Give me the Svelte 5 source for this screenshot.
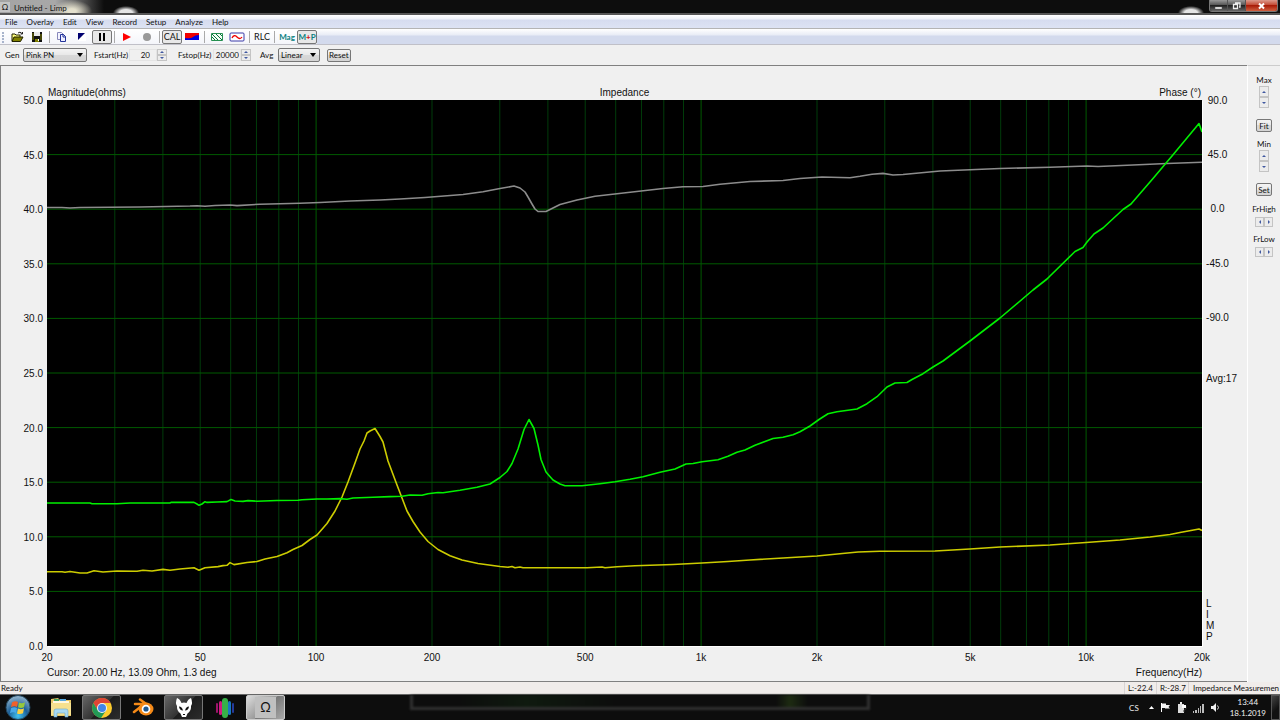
<script>
  const menus = ['File', 'Overlay', 'Edit', 'View', 'Record', 'Setup', 'Analyze', 'Help'];

  let generator = 'Pink PN';
  let averaging = 'Linear';
  let fstart = '20';
  let fstop = '20000';

  // plot area, in svg units
  const plot = { x: 47, y: 100, width: 1155, height: 546 };

  const fMin = 20;
  const fMax = 20000;
  const ratio = (f) => Math.log(f / fMin) / Math.log(fMax / fMin);

  // vertical grid lines, 1-2-3..9 in every decade
  const gridFreqs = [10, 100, 1000, 10000]
    .flatMap(decade => [1, 2, 3, 4, 5, 6, 7, 8, 9].map(n => n * decade))
    .filter(f => f > fMin && f < fMax);
  const gridX = gridFreqs.map(f => ({
    x: plot.x + ratio(f) * plot.width,
    major: String(f)[0] === '1',
  }));
  const gridY = [1, 2, 3, 4, 5, 6, 7, 8, 9].map(i => plot.y + (i * plot.height) / 10);

  const ohms = ['50.0', '45.0', '40.0', '35.0', '30.0', '25.0', '20.0', '15.0', '10.0', '5.0', '0.0'];
  const phases = ['90.0', '45.0', '0.0', '-45.0', '-90.0'];

  const ticks = [
    [20, '20'], [50, '50'], [100, '100'], [200, '200'], [500, '500'],
    [1000, '1k'], [2000, '2k'], [5000, '5k'], [10000, '10k'], [20000, '20k'],
  ].map(([f, label], i, all) => ({
    label,
    span: i < all.length - 1 ? (ratio(all[i + 1][0]) - ratio(f)) * 100 : 0,
  }));

  const phaseCurve = `47,207.5 62,207.5 70,208 80,207.5 140,207 190,206 197,205.7 205,206.3 215,205.5 230,205 237,205.6
    260,204.2 300,203.3 320,202.5 350,201 380,200 400,199 425,197.5 463,194.5 483,191.7 500,188.5 514,186 520,188
    525,192 528,197 532,204 535,209 538,211.5 546,211.5 552,208.5 560,204.5 577,200 595,196.2 617,193.8 663,188.5
    683,186.7 703,186.5 720,184.3 750,181.5 783,180.5 800,178.5 822,177 850,177.7 860,176.3 872,174.3 883,173.4
    893,175 903,174.5 940,171 1000,168.5 1050,167.3 1087,166 1098,166.5 1133,165 1167,163.5 1202,162.3`;

  const overlayCurve = `47,571.7 62,571.7 65,572.3 70,571.5 80,573 87,573 94,570.8 103,572 117,571 137,571.3 143,570.3
    152,571 163,569.4 170,570.2 180,569 194,567.8 199,570.2 205,567.7 218,566.6 223,565.6 227,565.3 230,562.6
    234,564.6 247,562.5 257,561.5 265,559 277,556.5 287,552.7 293,549.5 302,545.5 310,539.5 317,535 327,523.5
    335,511 342,497 348,482 355,463 360,449 364,441 367,433 370,431 375,428.5 380,436.5 383,442 388,461 397,485
    402,498 407,511 413,521.5 420,532 428,541.5 438,549.5 450,555.7 462,560 478,563.5 500,566.5 508,567.3
    512,566.5 515,567.7 520,567 523,567.8 587,567.8 602,567 605,567.7 617,566.7 635,565.8 673,564.5 702,563
    728,561.5 750,560 800,557 817,556 845,553.2 858,552 880,551.3 935,551 970,549 1000,547 1050,545 1086,542.5
    1120,540 1150,537 1170,534.5 1180,532.5 1199,529 1202,530.5`;

  const magnitudeCurve = `47,503 90,503 92,503.7 117,503.7 130,503 170,503 171,502.4 194,502.4 197,504 199,505.3
    202,504 205,501.7 207,502.4 217,502 227,501.6 231,499.5 235,501 243,501.4 248,500.6 257,501.2 277,500.5
    298,500.3 302,499.7 317,499 327,499 340,498.6 347,499.2 353,498 373,497.2 390,496.6 402,496.3 410,495
    422,495.3 428,493.7 438,492.5 443,492.7 460,490.3 477,487.3 490,484 500,477.5 507,471.5 512,463.5 518,449
    524,429.5 529,419.5 534,428.5 538,445 541,459.5 544,467 546,472 549,475.5 553,480 560,484 565,485.7 582,485.7
    600,483.7 615,481.7 630,479.3 643,476.7 660,472.3 675,469 686,464 693,463.5 702,461.8 718,459.7 728,456.3
    737,452.3 745,450 755,445.3 767,440.7 773,438.5 783,437.3 793,434.7 800,431.7 810,426 819,419.5 828,413.8
    837,411.7 857,409 867,403.7 877,396.7 887,387 895,383 907,382.5 912,379.5 923,373.7 933,367 943,361 970,341
    1000,318 1033,290 1047,279 1050,276 1075,251.5 1083,247.5 1087,242 1094,234 1103,228 1123,209.5 1131,204
    1153,178.5 1172,156 1199,123.5 1202,132`;
</script>

<div class="screen">
  <header class="titlebar">
    <span class="app-icon">Ω</span>
    <span class="title">Untitled - Limp</span>
    <div class="window-buttons">
      <button aria-label="Minimize"><svg width="9" height="8"><path d="M1 5h7v2H1z" fill="#fff" stroke="#555" stroke-width=".5" /></svg></button>
      <button aria-label="Restore"><svg width="9" height="8"><path d="M3 1h5v4H7M1.500 2.500h4v4h-4z" fill="none" stroke="#eee" stroke-width="1.300" /></svg></button>
      <button class="close" aria-label="Close"><svg width="9" height="8"><path d="M2 1.500l5 5M7 1.500l-5 5" stroke="#fff" stroke-width="2" /></svg></button>
    </div>
  </header>

  <nav class="menubar">
    {#each menus as menu}
      <button>{menu}</button>
    {/each}
  </nav>

  <div class="toolbar">
    <div class="tools">
      <span class="grip"></span>
      <button aria-label="Open">
        <svg width="13" height="12"><path d="M1 10V3h3l1 1h4v2" fill="#ffff80" stroke="#222200" /><path d="M1 10.500l2-4.500h9l-2.500 4.500z" fill="#808000" stroke="#222200" /><path d="M7 2q2-2 4 .5M11.500 1v2h-2" fill="none" stroke="#222" /></svg>
      </button>
      <button aria-label="Save">
        <svg width="12" height="12"><path d="M1 1h10v10H1z" fill="#111" /><path d="M3 1h6v4H3z" fill="#e8e8e8" /><path d="M2 2v7M10 3v6" stroke="#808000" /><path d="M4 8h4v3H4z" fill="#808000" /><path d="M7 8h1v2H7z" fill="#fff" /></svg>
      </button>
      <i class="sep"></i>
      <button aria-label="Copy">
        <svg width="12" height="12"><path d="M1.500 1.500h4l2 2v5h-6z" fill="#f4f4ff" stroke="#8888bb" /><path d="M4.500 3.500h3l2 2v5h-5z" fill="#eef" stroke="#223399" /><path d="M7 3v3h3" fill="none" stroke="#223399" /></svg>
      </button>
      <button aria-label="Black and white">
        <svg width="10" height="10"><path d="M1 1h8v8H1z" fill="#fff" /><path d="M1 1h7L1 8z" fill="#000070" /></svg>
      </button>
      <button class="pressed" aria-label="Pause">
        <svg width="10" height="10"><path d="M2 1h2v8H2zM6 1h2v8H6z" fill="#000" /></svg>
      </button>
      <i class="sep"></i>
      <button aria-label="Start">
        <svg width="10" height="10"><path d="M1 1l8 4-8 4z" fill="#f00" /></svg>
      </button>
      <button aria-label="Stop">
        <svg width="10" height="10"><circle cx="5" cy="5" r="4" fill="#999" /></svg>
      </button>
      <i class="sep"></i>
      <button class="pressed cal">CAL</button>
      <button aria-label="Colors">
        <svg width="14" height="9"><path d="M0 1h14v7H0z" fill="#0000e0" /><path d="M0 1h14v2q-4 0-6 2t-8 1z" fill="#f00000" /></svg>
      </button>
      <i class="sep"></i>
      <button aria-label="Overlay">
        <svg width="12" height="10"><path d="M.500 1.500h11v7H.5z" fill="#f4fff4" stroke="#259050" /><path d="M1 2l6 6M5 2l6 6M1 5l3 3M9 2l2 2" stroke="#087040" /></svg>
      </button>
      <button aria-label="Signal">
        <svg width="16" height="10"><rect x="1" y="1" width="14" height="8" rx="1" fill="#fff" stroke="#3838a8" /><path d="M3 6q2-4 5-1t5 0" fill="none" stroke="#f00000" stroke-width="1.300" /></svg>
      </button>
      <i class="sep"></i>
      <button class="cal">RLC</button>
      <i class="sep"></i>
      <button class="mag">Mag</button>
      <button class="mag pressed">M<b>+</b>P</button>
    </div>
  </div>

  <div class="genbar">
    <label for="gen">Gen</label>
    <span class="combo gen">
      <select id="gen" bind:value={generator}><option>Pink PN</option><option>Sine</option></select>
      <svg width="7" height="4"><path d="M0 0h6L3 4z" fill="#000" /></svg>
    </span>
    <label for="fstart">Fstart(Hz)</label>
    <span class="number">
      <input id="fstart" bind:value={fstart} />
      <span class="spin">
        <button aria-label="Raise start"><svg width="4" height="2"><path d="M0 2l2-2 2 2z" /></svg></button>
        <button aria-label="Lower start"><svg width="4" height="2"><path d="M0 0l2 2 2-2z" /></svg></button>
      </span>
    </span>
    <label for="fstop" class="stop">Fstop(Hz)</label>
    <span class="number">
      <input id="fstop" bind:value={fstop} />
      <span class="spin">
        <button aria-label="Raise stop"><svg width="4" height="2"><path d="M0 2l2-2 2 2z" /></svg></button>
        <button aria-label="Lower stop"><svg width="4" height="2"><path d="M0 0l2 2 2-2z" /></svg></button>
      </span>
    </span>
    <label for="avg" class="avg-label">Avg</label>
    <span class="combo avg-combo">
      <select id="avg" bind:value={averaging}><option>Linear</option><option>None</option></select>
      <svg width="7" height="4"><path d="M0 0h6L3 4z" fill="#000" /></svg>
    </span>
    <button class="push">Reset</button>
  </div>

  <main>
    <section class="chart">
      <div class="captions">
        <span>Magnitude(ohms)</span>
        <span>Impedance</span>
        <span>Phase (°)</span>
      </div>

      <div class="ohms">
        {#each ohms as value}
          <span>{value}</span>
        {/each}
      </div>

      <svg class="plot" viewBox="47 100 1155 546" preserveAspectRatio="none">
        {#each gridX as line}
          <line class="grid" class:minor={!line.major} x1={line.x} x2={line.x} y1="100" y2="646" />
        {/each}
        {#each gridY as y}
          <line class="grid" x1="47" x2="1202" y1={y} y2={y} />
        {/each}
        <polyline points={phaseCurve} stroke="#8c8c8c" />
        <polyline points={overlayCurve} stroke="#cccc00" />
        <polyline points={magnitudeCurve} stroke="#00f000" />
      </svg>

      <div class="right-axis">
        <div class="phases">
          {#each phases as value}
            <span>{value}</span>
          {/each}
        </div>
        <span class="average">Avg:17</span>
        <div class="brand"><span>L</span><span>I</span><span>M</span><span>P</span></div>
      </div>

      <div class="footer">
        <div class="ticks">
          {#each ticks as tick}
            <div style="width: {tick.span}%"><span>{tick.label}</span></div>
          {/each}
        </div>
        <div class="info">
          <span>Cursor: 20.00 Hz, 13.09 Ohm, 1.3 deg</span>
          <span>Frequency(Hz)</span>
        </div>
      </div>
    </section>

    <aside>
      <span>Max</span>
      <span class="spin tall">
        <button aria-label="Raise max"><svg width="4" height="2"><path d="M0 2l2-2 2 2z" /></svg></button>
        <button aria-label="Lower max"><svg width="4" height="2"><path d="M0 0l2 2 2-2z" /></svg></button>
      </span>
      <button class="push">Fit</button>
      <span>Min</span>
      <span class="spin tall">
        <button aria-label="Raise min"><svg width="4" height="2"><path d="M0 2l2-2 2 2z" /></svg></button>
        <button aria-label="Lower min"><svg width="4" height="2"><path d="M0 0l2 2 2-2z" /></svg></button>
      </span>
      <button class="push">Set</button>
      <span class="limit">FrHigh</span>
      <span class="spin wide">
        <button aria-label="High limit down"><svg width="2" height="4"><path d="M2 0v4L0 2z" /></svg></button>
        <button aria-label="High limit up"><svg width="2" height="4"><path d="M0 0v4l2-2z" /></svg></button>
      </span>
      <span class="limit">FrLow</span>
      <span class="spin wide">
        <button aria-label="Low limit down"><svg width="2" height="4"><path d="M2 0v4L0 2z" /></svg></button>
        <button aria-label="Low limit up"><svg width="2" height="4"><path d="M0 0v4l2-2z" /></svg></button>
      </span>
    </aside>
  </main>

  <div class="statusbar">
    <span class="ready">Ready</span>
    <span class="cell">L:-22.4</span>
    <span class="cell">R:-28.7</span>
    <span class="cell device">Impedance Measuremen</span>
  </div>

  <footer class="taskbar">
    <div class="ghost"></div>
    <button class="start" aria-label="Start menu">
      <svg width="26" height="25" viewBox="0 0 26 25">
        <defs>
          <radialGradient id="orb" cx=".5" cy=".85" r=".8"><stop offset="0" stop-color="#43c4f0" /><stop offset=".5" stop-color="#1c6099" /><stop offset="1" stop-color="#8fb0c8" /></radialGradient>
        </defs>
        <circle cx="13" cy="12.500" r="12" fill="url(#orb)" stroke="#20465f" />
        <path d="M7 7.500q3-2 6-.5l-1 5q-3-1.500-6 .2z" fill="#f0602a" />
        <path d="M14 7.500q3 1.500 6-.3l-1 5q-3 1.500-6 0z" fill="#96c83c" />
        <path d="M6 13.200q3-1.800 6-.2l-1 5q-3-1.500-6 .2z" fill="#48a8e8" />
        <path d="M13 13.500q3 1.500 6-.3l-1 5q-3 1.500-6 .2z" fill="#fcd040" />
      </svg>
    </button>
    <button class="task" aria-label="Explorer">
      <svg width="22" height="21" viewBox="0 0 22 21">
        <path d="M1 2l7-1 2 2h11v16H1z" fill="#e8c868" />
        <path d="M4 2h5v3H4z" fill="#40a060" /><path d="M10 2h6v3h-6z" fill="#58a8e0" /><path d="M3 4h16v4H3z" fill="#fff8e0" />
        <path d="M1 6h20v12H1z" fill="#f6e08e" />
        <path d="M4 20v-6q0-2 2-2h10q2 0 2 2v6h-3v-4H7v4z" fill="#a8daf4" stroke="#68a8cc" stroke-width=".6" />
      </svg>
    </button>
    <button class="task open" aria-label="Chrome">
      <svg width="20" height="20" viewBox="0 0 20 20">
        <circle cx="10" cy="10" r="10" fill="#fccb2e" />
        <path d="M10 5h8.700A10 10 0 0 0 1.340 5L5.700 12.500z" fill="#df4535" />
        <path d="M1.340 5A10 10 0 0 0 9 19.900L14 12.500H6z" fill="#229956" />
        <circle cx="10" cy="10" r="5" fill="#f4f4f4" /><circle cx="10" cy="10" r="4" fill="#4285e8" />
      </svg>
    </button>
    <button class="task" aria-label="Blender">
      <svg width="22" height="19" viewBox="0 0 22 19">
        <path d="M8 1.500l7 5M3 6h12M2 14l9-7" stroke="#f58a18" stroke-width="2.500" stroke-linecap="round" />
        <ellipse cx="14" cy="11" rx="7.500" ry="6.500" fill="#f58a18" /><circle cx="14" cy="11" r="4.300" fill="#fff" /><circle cx="14" cy="11" r="2.600" fill="#205890" />
      </svg>
    </button>
    <button class="task open" aria-label="Foobar2000">
      <svg width="18" height="21" viewBox="0 0 18 21">
        <path d="M2 1q3 1 4.500 5Q9 5 11.500 6 13 2 16 1q2 5 0 8 .5 5-3.500 7.500L11 20H7l-1.500-3.500Q1.500 14 2 9 0 6 2 1z" fill="#fff" />
        <path d="M4 9.500q3 0 4 4-3.500 0-4-4zM14 9.500q-3 0-4 4 3.500 0 4-4z" fill="#111" /><path d="M8 17h2v1H8z" fill="#111" />
      </svg>
    </button>
    <button class="task" aria-label="Equalizer">
      <svg width="20" height="22" viewBox="0 0 20 22">
        <rect x="1" y="6" width="2" height="10" rx="1" fill="#a0146c" /><rect x="4" y="4" width="3" height="14" rx="1.500" fill="#d01880" />
        <rect x="7" y="1" width="6" height="20" rx="3" fill="#38b048" /><rect x="13" y="4" width="3" height="14" rx="1.500" fill="#1878c0" /><rect x="17" y="6" width="2" height="10" rx="1" fill="#243a9c" />
      </svg>
    </button>
    <button class="task open active" aria-label="Limp"><span>Ω</span></button>

    <div class="tray">
      <span class="lang">CS</span>
      <svg width="5" height="3"><path d="M0 3h5L2.500 0z" fill="#fff" /></svg>
      <svg width="11" height="11"><path d="M1.500 1v9" stroke="#fff" /><path d="M2 1.500h4V3h4L8.500 5 10 6.500H5V6H2z" fill="#f0f0f0" /></svg>
      <svg width="10" height="11"><path d="M1 2h6v9H1z" fill="#ddd" /><path d="M3 0h2v2H3z" fill="#eee" /><path d="M5 4h4v3L7 8v2" fill="none" stroke="#333" /><path d="M5 3h4v3H5z" fill="#fff" /></svg>
      <svg width="11" height="10"><path d="M0 8h1v2H0zM2 7h2v3H2zM5 5h1v5H5zM7 3h1v7H7zM9 1h2v9H9z" fill="#bbb" /></svg>
      <svg width="10" height="11"><path d="M1 4h2l3-3v9L3 7H1z" fill="#eee" /><path d="M7.500 3.500q2 2 0 4" fill="none" stroke="#ddd" /></svg>
      <div class="clock"><span>13:44</span><span>18.1.2019</span></div>
    </div>
    <button class="desktop" aria-label="Show desktop"></button>
  </footer>
</div>

<style>
  :global(body) {
    margin: 0;
    background: #0d0d0d;
  }

  .screen {
    display: flex;
    flex-direction: column;
    height: 100vh;
    overflow: hidden;
    font-family: Lato, "Noto Sans", sans-serif;
    font-size: 8px;
    line-height: 12px;
    color: #111;
    background: #f0f0f0;
  }

  button, input, select {
    margin: 0;
    padding: 0;
    border: 0;
    border-radius: 0;
    background: none;
    font: inherit;
    color: inherit;
  }

  button {
    display: flex;
    align-items: center;
    justify-content: center;
  }

  svg {
    display: block;
    flex: none;
  }

  /* title bar */
  .titlebar {
    box-sizing: border-box;
    display: flex;
    align-items: center;
    height: 15px;
    flex: none;
    border-bottom: 2px solid #555;
    background:
      radial-gradient(ellipse 20px 11px at 72px 11px, #e4e0cc 20%, transparent),
      radial-gradient(ellipse 13px 7px at 126px 13px, #e4e4e4 50%, transparent),
      radial-gradient(ellipse 13px 7px at 1191px 13px, #e4e4e4 50%, transparent),
      linear-gradient(90deg, #a4a4a4, #a8a8a8 55px, #606060 78px, #0d0d0d 104px);
  }

  .app-icon {
    width: 10px;
    height: 10px;
    line-height: 10px;
    text-align: center;
    background: #c4c4c4;
  }

  .title {
    margin-left: 4px;
    padding-top: 2px;
  }

  .window-buttons {
    display: flex;
    align-self: flex-start;
    margin-left: auto;
    margin-right: 2px;
    border: 1px solid #777;
    border-top: 0;
    border-radius: 0 0 3px 3px;
    overflow: hidden;
  }

  .window-buttons button {
    width: 18px;
    height: 11px;
    border-right: 1px solid #555;
    background: linear-gradient(#999, #555 45%, #222 50%, #666);
  }

  .window-buttons .close {
    width: 31px;
    border-right: 0;
    background: linear-gradient(#dc9a8c, #c24a34 45%, #a81c08 50%, #d06040);
  }

  /* menu */
  .menubar {
    box-sizing: border-box;
    display: flex;
    gap: 9px;
    height: 14px;
    flex: none;
    padding-left: 5px;
    border-bottom: 1px solid #b4b4b4;
    background: linear-gradient(#fff, #eef1f8 4px, #d6dcef 5px, #dde3f3);
  }

  /* toolbar */
  .toolbar {
    box-sizing: border-box;
    display: flex;
    height: 16px;
    flex: none;
    border-bottom: 1px solid #c0c0c8;
    background: linear-gradient(#fff, #e8ecf6 6px, #d3daed 7px, #d3daed);
  }

  .tools {
    display: flex;
    align-items: center;
    background: linear-gradient(#fff, #f4f5fa);
  }

  .grip {
    width: 7px;
    height: 12px;
    background: radial-gradient(circle at 3px 2px, #a8b4cc 1px, transparent 1px) 0 0 / 7px 3px;
  }

  .tools button {
    box-sizing: border-box;
    width: 20px;
    height: 14px;
  }

  .tools .pressed {
    border: 1px solid #777;
    border-radius: 2px;
    background: #e8e8e8;
  }

  .sep {
    width: 1px;
    height: 12px;
    margin: 0 2px;
    background: #aaa;
  }

  .tools .cal {
    font-size: 9px;
  }

  .tools .mag {
    font-weight: 700;
    color: #088080;
  }

  .mag b {
    color: #d02020;
  }

  /* generator bar */
  .genbar {
    display: flex;
    align-items: center;
    height: 20px;
    flex: none;
    padding-left: 5px;
  }

  .genbar label {
    white-space: nowrap;
  }

  .genbar label[for="gen"] {
    width: 14px;
  }

  .combo {
    box-sizing: border-box;
    display: grid;
    align-items: center;
    height: 14px;
    border: 1px solid #777;
    border-radius: 2px;
    background: linear-gradient(#f4f4f4, #e8e8e8 50%, #d8d8d8 50%, #d4d4d4);
  }

  .combo select {
    grid-area: 1 / 1;
    width: 100%;
    padding-left: 2px;
    appearance: none;
  }

  .combo svg {
    grid-area: 1 / 1;
    justify-self: end;
    margin-right: 2px;
    pointer-events: none;
  }

  .gen {
    width: 64px;
    margin: 0 7px 0 4px;
  }

  .genbar label[for="fstart"],
  .genbar .stop {
    width: 35px;
  }

  .avg-combo {
    width: 42px;
    margin-right: 7px;
  }

  .genbar .stop {
    margin-left: 11px;
  }

  .genbar .avg-label {
    width: 18px;
    margin-left: 9px;
  }

  .number {
    display: flex;
    align-items: center;
  }

  .number input {
    box-sizing: border-box;
    width: 28px;
    height: 12px;
    padding-right: 6px;
    border: 1px solid #e4e4e4;
    text-align: right;
  }

  .number #fstop {
    padding-right: 1px;
  }

  .spin {
    display: flex;
    flex-direction: column;
  }

  .spin button {
    box-sizing: border-box;
    width: 10px;
    height: 6px;
    border: 1px solid #c4c4c4;
    background: #ececec;
  }

  .spin svg {
    fill: #4058a0;
  }

  .spin.tall button {
    height: 11px;
  }

  .spin.wide {
    flex-direction: row;
  }

  .spin.wide button {
    width: 9px;
    height: 10px;
  }

  .push {
    box-sizing: border-box;
    height: 13px;
    min-width: 16px;
    padding: 0 1px;
    border: 1px solid #777;
    border-radius: 2px;
    background: linear-gradient(#f4f4f4, #e8e8e8 50%, #d8d8d8 50%, #d4d4d4);
  }

  /* chart */
  main {
    display: flex;
    flex: 1;
    min-height: 0;
  }

  .chart {
    display: grid;
    flex: 1;
    grid-template-columns: 46px 1fr 45px;
    grid-template-rows: 34px 1fr 35px;
    border: solid #808080;
    border-width: 1px 0 1px 1px;
    font-family: "Liberation Sans", Arial, sans-serif;
    font-size: 10px;
  }

  .captions {
    grid-column: 2;
    display: grid;
    grid-template-columns: 1fr 1fr 1fr;
    align-items: end;
    padding: 0 1px 1px;
    text-align: center;
  }

  .captions span:first-child {
    text-align: left;
  }

  .captions span:last-child {
    text-align: right;
  }

  .ohms, .phases {
    display: flex;
    flex-direction: column;
    justify-content: space-between;
  }

  .ohms {
    grid-column: 1;
    align-items: flex-end;
    padding-right: 4px;
  }

  .ohms span, .phases span {
    height: 0;
    line-height: 2px;
  }

  .plot {
    width: 100%;
    height: 100%;
    min-height: 0;
    background: #000;
    box-shadow: 1px 1px #fff;
  }

  .plot line, .plot polyline {
    fill: none;
    vector-effect: non-scaling-stroke;
  }

  .plot polyline {
    stroke-width: 1.6px;
    stroke-linejoin: round;
  }

  .grid {
    stroke: #005a00;
  }

  .grid.minor {
    stroke: #003c0a;
  }

  .right-axis {
    display: flex;
    flex-direction: column;
    padding-bottom: 4px;
  }

  .phases {
    flex: 0 0 40%;
    width: 31px;
    align-items: center;
  }

  .average {
    margin: 56px 0 0 4px;
  }

  .brand {
    display: flex;
    flex-direction: column;
    margin: auto 0 0 4px;
    line-height: 11px;
  }

  .footer {
    grid-column: 2;
    padding-top: 6px;
  }

  .ticks {
    display: flex;
  }

  .ticks span {
    display: flex;
    justify-content: center;
    width: 0;
  }

  .info {
    display: flex;
    justify-content: space-between;
    padding-top: 3px;
  }

  /* range panel */
  aside {
    box-sizing: border-box;
    display: flex;
    flex-direction: column;
    align-items: center;
    width: 33px;
    padding-top: 8px;
    border-left: 1px solid #fff;
    border-top: 1px solid #ccc;
  }

  aside .push {
    margin: 11px 0 6px;
  }

  aside .limit {
    padding: 1px 0 2px;
  }

  aside .wide {
    margin-bottom: 5px;
  }

  /* status bar */
  .statusbar {
    box-sizing: border-box;
    display: flex;
    height: 13px;
    flex: none;
    border-bottom: 1px solid #666;
    background: #f0ecea;
    white-space: nowrap;
  }

  .ready {
    flex: 1;
    padding-left: 1px;
  }

  .cell {
    box-sizing: border-box;
    width: 32px;
    padding-left: 3px;
    border-left: 1px solid #d8d4d4;
  }

  .cell.device {
    width: 92px;
    padding-left: 4px;
  }

  /* taskbar */
  .taskbar {
    position: relative;
    display: flex;
    align-items: center;
    height: 25px;
    flex: none;
    background: #0d0d0d;
    color: #f0f0f0;
  }

  .ghost {
    position: absolute;
    left: 32%;
    right: 32%;
    top: 0;
    height: 12px;
    border: solid #303030;
    border-width: 0 3px 3px;
    background: linear-gradient(90deg, #0d0d0d 10%, #0f1a0f 25%, #0d0d0d 45%, #0d0d0d 80%, #1d2b12 83%, #0d0d0d 87%);
    filter: blur(1px);
  }

  .start {
    width: 36px;
  }

  .task {
    box-sizing: border-box;
    width: 39px;
    height: 25px;
    margin-right: 2px;
    border: 1px solid transparent;
    border-radius: 2px;
  }

  .start + .task {
    margin-left: 5px;
  }

  .task.open {
    border-color: #777;
    background: linear-gradient(135deg, #666, #333 50%, #1c1c1c 52%, #2c2c2c);
  }

  .task.active {
    border-color: #ccc;
    background: linear-gradient(135deg, #ddd, #999 50%, #777 52%, #aaa);
  }

  .active span {
    width: 21px;
    height: 21px;
    background: #c0c0c0;
    color: #111;
    font-size: 13px;
    line-height: 21px;
  }

  .tray {
    display: flex;
    align-items: center;
    gap: 6px;
    margin-left: auto;
  }

  .lang {
    margin-right: 4px;
  }

  .clock {
    display: flex;
    flex-direction: column;
    align-items: center;
    margin: 0 5px 0 4px;
    line-height: 11px;
  }

  .desktop {
    box-sizing: border-box;
    width: 9px;
    height: 25px;
    border: 1px solid #555;
    background: linear-gradient(135deg, #444, #111 60%);
  }
</style>
